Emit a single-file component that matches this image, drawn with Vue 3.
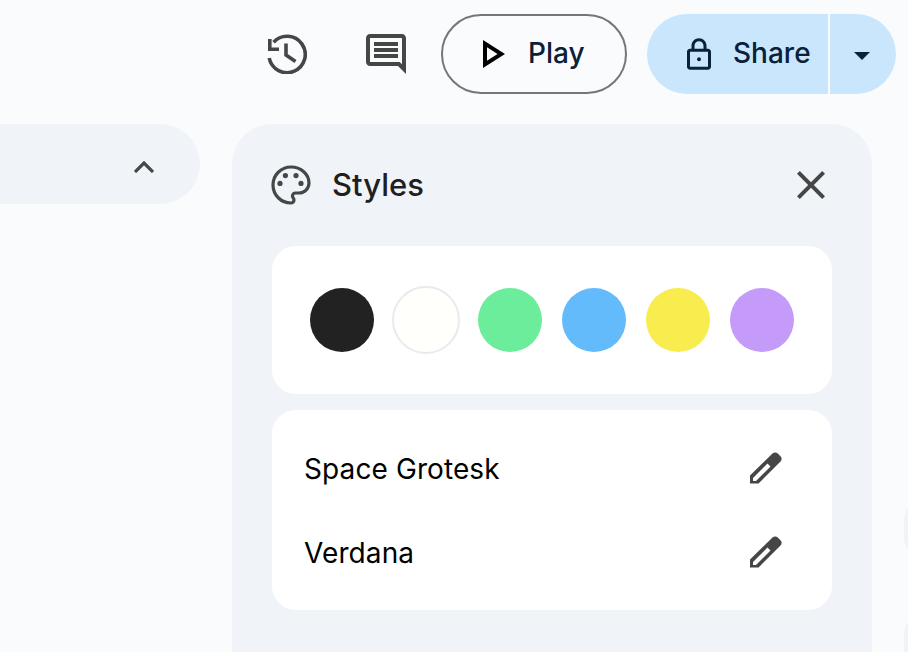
<template>
  <div class="page">
    <header class="toolbar">
      <button class="icon-button">
        <svg class="history-icon" viewBox="0 0 40 40">
          <path class="history-line" d="M6.6 8.2A18.2 18.2 0 1 1 2.2 24" />
          <path d="M1 5h3.6v8.4H12V17H1z" />
          <path class="history-line" d="M19 9.5V21L28.5 27.5" />
        </svg>
      </button>
      <button class="icon-button">
        <svg class="comment-icon" viewBox="2 2 20 20"><path d="M21.99 4c0-1.1-.89-2-1.99-2H4c-1.1 0-2 .9-2 2v12c0 1.1.9 2 2 2h14l4 4-.01-18zM20 4v13.17L18.83 16H4V4h16zM6 12h12v2H6zm0-3h12v2H6zm0-3h12v2H6z" /></svg>
      </button>
      <button class="play-button">
        <svg class="play-icon" viewBox="8 5 11 14"><path d="M10 8.64L15.27 12 10 15.36V8.64M8 5v14l11-7L8 5z" /></svg>
        <span>Play</span>
      </button>
      <div class="share-group">
        <button class="share-button">
          <svg class="lock-icon" viewBox="4 1 16 21">
            <path d="M18 8h-1V6c0-2.76-2.24-5-5-5S7 3.24 7 6v2H6c-1.1 0-2 .9-2 2v10c0 1.1.9 2 2 2h12c1.1 0 2-.9 2-2V10c0-1.1-.9-2-2-2zM9 6c0-1.66 1.34-3 3-3s3 1.34 3 3v2H9V6zm9 14H6V10h12v10z" />
            <circle cx="12" cy="15" r="1.3" />
          </svg>
          <span>Share</span>
        </button>
        <button class="share-menu">
          <svg class="caret-icon" viewBox="7 10 10 5"><path d="M7 10l5 5 5-5z" /></svg>
        </button>
      </div>
    </header>

    <main class="workspace">
      <div class="collapsed-bar">
        <svg class="chevron-icon" viewBox="0 0 20 12"><path class="icon-line" d="M1 11L10 2L19 11" /></svg>
      </div>

      <section class="styles-panel">
        <div class="panel-header">
          <svg class="palette-icon" viewBox="2 2 20 20">
            <path class="palette-line" d="M12 21C7 21 3 17 3 12S7 3 12 3s9 3.6 9 8c0 2.76-2.24 5-5 5h-1.77c-.83 0-1.5.67-1.5 1.5 0 .37.14.7.38 1 .24.3.39.64.39 1 0 .83-.67 1.5-1.5 1.5Z" />
            <circle cx="6.5" cy="11.2" r="1.3" />
            <circle cx="9.2" cy="7.3" r="1.3" />
            <circle cx="14.5" cy="7.3" r="1.3" />
            <circle cx="17" cy="11.2" r="1.3" />
          </svg>
          <h2 class="panel-title">Styles</h2>
          <svg class="close-icon" viewBox="5 5 14 14"><path d="M19 6.41L17.59 5 12 10.59 6.41 5 5 6.41 10.59 12 5 17.59 6.41 19 12 13.41 17.59 19 19 17.59 13.41 12z" /></svg>
        </div>

        <div class="card swatches">
          <div
            v-for="swatch in swatches"
            :key="swatch.color"
            class="swatch"
            :class="{ 'swatch-light': swatch.light }"
            :style="{ backgroundColor: swatch.color }"
          ></div>
        </div>

        <div class="card fonts">
          <div v-for="font in fonts" :key="font" class="font-row">
            <span class="font-name">{{ font }}</span>
            <svg class="edit-icon" viewBox="0 0 32 32">
              <path fill-rule="evenodd" d="M0 31.5V23.5L22.5 1.5C24 0 26.3 0 27.8 1.5L30.5 4.2C32 5.7 32 8 30.5 9.5L8.5 31.5ZM3 26L17.5 11.5L20.5 14.5L6 29H3Z" />
            </svg>
          </div>
        </div>
      </section>

      <div class="side-rail">
        <div class="rail-tab"></div>
        <div class="rail-tab"></div>
      </div>
    </main>
  </div>
</template>

<script setup>
// Theme colours shown in the styles panel
const swatches = [
  { color: '#222222' },
  { color: '#fffffb', light: true },
  { color: '#6ced9b' },
  { color: '#63bbfc' },
  { color: '#f9ec4e' },
  { color: '#c49bf9' },
];

const fonts = ['Space Grotesk', 'Verdana'];
</script>

<style>
html, body {
  background: #f9fbfd;
  overflow: hidden;
}
</style>

<style scoped>
.page {
  width: 908px;
  height: 652px;
  overflow: hidden;
  background: #f9fbfd;
  font-family: Inter, "Liberation Sans", sans-serif;
}

.toolbar {
  display: flex;
  align-items: center;
  justify-content: flex-end;
  height: 80px;
  padding: 14px 12px 0 0;
}

button {
  font-family: inherit;
  border: none;
  background: none;
  padding: 0;
}

.icon-button {
  display: flex;
  align-items: center;
  justify-content: center;
  width: 40px;
  height: 40px;
  margin-right: 59px;
}

.icon-button + .icon-button {
  margin-right: 35px;
}

.icon-button svg {
  fill: #444746;
}

.icon-line {
  fill: none;
  stroke: #444746;
  stroke-width: 3.2;
}

.history-line {
  fill: none;
  stroke: #444746;
  stroke-width: 3.6;
}

.palette-line {
  fill: none;
  stroke: #444746;
  stroke-width: 1.6;
}

.history-icon,
.comment-icon {
  width: 40px;
  height: 40px;
}

.play-button {
  display: flex;
  align-items: center;
  width: 186px;
  height: 80px;
  padding-left: 40px;
  border: 2px solid #747775;
  border-radius: 40px;
  box-sizing: border-box;
  color: #0b2039;
  font-size: 28px;
  line-height: 32px;
  font-weight: 500;
}

.play-button span,
.share-button span {
  margin-top: -2px;
}

.play-icon {
  width: 22px;
  height: 28px;
  margin-right: 23px;
  fill: #000;
}

.share-group {
  display: flex;
  height: 80px;
  margin-left: 20px;
}

.share-button {
  display: flex;
  align-items: center;
  width: 181px;
  padding-left: 40px;
  border-radius: 40px 0 0 40px;
  background: #c9e6fd;
  color: #0b2039;
  font-size: 28px;
  line-height: 32px;
  font-weight: 500;
}

.lock-icon {
  width: 24px;
  height: 32px;
  margin-right: 22px;
  fill: #0b2039;
}

.share-menu {
  display: flex;
  align-items: center;
  justify-content: center;
  width: 66px;
  margin-left: 2px;
  padding-right: 2px;
  box-sizing: border-box;
  border-radius: 0 40px 40px 0;
  background: #c9e6fd;
}

.caret-icon {
  width: 16px;
  height: 8px;
  margin-top: 3px;
  fill: #0b2039;
}

.workspace {
  display: flex;
  align-items: flex-start;
  margin-top: 30px;
}

.collapsed-bar {
  display: flex;
  align-items: center;
  justify-content: flex-end;
  width: 200px;
  height: 80px;
  padding-right: 46px;
  box-sizing: border-box;
  flex-shrink: 0;
  border-radius: 0 40px 40px 0;
  background: #f0f4f9;
}

.chevron-icon {
  width: 20px;
  height: 12px;
  margin-top: 6px;
}

.styles-panel {
  flex-shrink: 0;
  width: 640px;
  height: 528px;
  margin-left: 32px;
  padding: 0 40px;
  box-sizing: border-box;
  border-radius: 40px 40px 0 0;
  background: #f0f4f9;
}

.panel-header {
  display: flex;
  align-items: center;
  height: 122px;
}

.palette-icon {
  width: 40px;
  height: 40px;
  margin-left: -1px;
  fill: #444746;
}

.panel-title {
  flex: 1;
  margin: -2px 0 0 21px;
  color: #1f1f1f;
  font-size: 31px;
  font-weight: 500;
}

.close-icon {
  width: 28px;
  height: 28px;
  margin-right: 7px;
  fill: #444746;
}

.card {
  border-radius: 24px;
  background: #fff;
}

.swatches {
  display: flex;
  align-items: center;
  gap: 20px;
  height: 148px;
  padding-left: 38px;
  box-sizing: border-box;
}

.swatch {
  width: 64px;
  height: 64px;
  border-radius: 50%;
}

.swatch-light {
  outline: 2px solid #e8eaed;
}

.fonts {
  margin-top: 16px;
  padding: 16px 50px 16px 32px;
}

.font-row {
  display: flex;
  align-items: center;
  justify-content: space-between;
  height: 84px;
}

.font-name {
  margin-top: 1px;
  color: #000;
  font-size: 28px;
  letter-spacing: 0.1px;
}

.edit-icon {
  width: 32px;
  height: 32px;
  fill: #444746;
}

.side-rail {
  display: flex;
  flex-direction: column;
  gap: 50px;
  flex-shrink: 0;
  width: 40px;
  margin-left: 32px;
  padding-top: 373px;
}

.rail-tab {
  height: 64px;
  border-radius: 24px 0 0 24px;
  background: #f0f4f9;
}
</style>
